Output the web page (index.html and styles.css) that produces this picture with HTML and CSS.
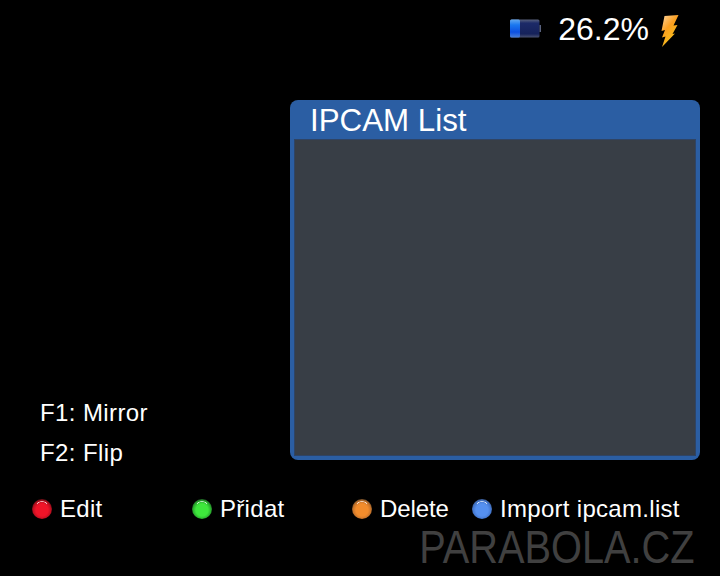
FILE: index.html
```html
<!DOCTYPE html>
<html lang="cs">
<head>
<meta charset="utf-8">
<title>IPCAM List</title>
<link rel="stylesheet" href="styles.css">
</head>
<body>
<div class="screen">
  <header class="status">
    <svg class="battery" width="34" height="20" viewBox="0 0 34 20" aria-hidden="true">
      <defs>
        <linearGradient id="batBody" x1="0" y1="0" x2="0" y2="1">
          <stop offset="0" stop-color="#59627e"/>
          <stop offset=".2" stop-color="#1c2a68"/>
          <stop offset=".8" stop-color="#16225a"/>
          <stop offset="1" stop-color="#4a5270"/>
        </linearGradient>
        <linearGradient id="batFill" x1="0" y1="0" x2="0" y2="1">
          <stop offset="0" stop-color="#62a8f0"/>
          <stop offset=".3" stop-color="#1a78f0"/>
          <stop offset=".7" stop-color="#0d50e0"/>
          <stop offset="1" stop-color="#4a80d8"/>
        </linearGradient>
      </defs>
      <rect x="2" y="0.500" width="29.500" height="18" rx="1.500" fill="url(#batBody)"/>
      <rect x="2" y="0.500" width="10" height="18" rx="1.500" fill="url(#batFill)"/>
      <rect x="31.500" y="6" width="1.500" height="7" fill="#59627e"/>
    </svg>
    <span class="percent">26.2%</span>
    <svg class="bolt" width="20" height="34" viewBox="0 0 20 34" aria-hidden="true">
      <defs>
        <linearGradient id="boltFill" x1="0" y1="0" x2="0.600" y2="1">
          <stop offset="0" stop-color="#ffd8a4"/>
          <stop offset=".45" stop-color="#fb9f20"/>
          <stop offset=".8" stop-color="#f7b81c"/>
          <stop offset="1" stop-color="#ffe070"/>
        </linearGradient>
      </defs>
      <path d="M5.500 2 L19.500 1 L14.500 11.500 L18.500 11 L13.500 20 L16 19.500 L3 33 L6.500 22.500 L3 23.500 L6 16 L2.500 17 Z" fill="url(#boltFill)"/>
    </svg>
  </header>

  <main class="content">
    <ul class="hints">
      <li>F1: Mirror</li>
      <li>F2: Flip</li>
    </ul>
    <section class="panel">
      <h1 class="panel-title">IPCAM List</h1>
      <div class="panel-body"></div>
    </section>
  </main>

  <nav class="legend">
    <span class="key"><i class="dot dot-red"></i>Edit</span>
    <span class="key"><i class="dot dot-green"></i>Přidat</span>
    <span class="key key-tight"><i class="dot dot-orange"></i>Delete</span>
    <span class="key"><i class="dot dot-blue"></i>Import ipcam.list</span>
  </nav>

  <footer class="brand"><span class="brand-text">PARABOLA.CZ</span></footer>
</div>
</body>
</html>
```

FILE: styles.css
```css
* {
  box-sizing: border-box;
}

html,
body {
  margin: 0;
  background: #000;
}

.screen {
  width: 720px;
  height: 576px;
  overflow: hidden;
  display: flex;
  flex-direction: column;
  color: #fff;
  font-family: "Liberation Sans", Arial, sans-serif;
}

.status {
  height: 100px;
  flex: none;
  padding: 13px 40px 0 0;
  display: flex;
  justify-content: flex-end;
  align-items: flex-start;
}

.battery {
  margin-top: 6px;
}

.percent {
  margin-left: 16px;
  font-size: 32px;
  line-height: 32px;
}

.bolt {
  margin-left: 10px;
  margin-top: 1px;
  margin-right: 1px;
}

.content {
  height: 380px;
  flex: none;
  padding: 0 20px 0 40px;
  display: flex;
  justify-content: space-between;
  align-items: flex-end;
}

.hints {
  list-style: none;
  margin: 0;
  padding: 0 0 7px;
  font-size: 24px;
  line-height: 40px;
  letter-spacing: 0.4px;
}

.panel {
  align-self: flex-start;
  width: 410px;
  height: 360px;
  display: flex;
  flex-direction: column;
  background: #2b5ea3;
  border-radius: 8px;
  padding: 0 4px 4px;
}

.panel-title {
  height: 39px;
  margin: 0;
  padding-left: 16px;
  font-size: 31.300px;
  font-weight: 400;
  line-height: 41px;
}

.panel-body {
  flex: 1;
  background: #383e46;
  border: 1px solid #2f4465;
}

.legend {
  height: 48px;
  flex: none;
  padding: 15px 0 0 32px;
  display: grid;
  grid-template-columns: 160px 160px 120px auto;
  align-items: start;
  font-size: 24px;
  line-height: 28px;
  letter-spacing: 0.3px;
}

.key {
  display: flex;
  align-items: center;
  gap: 8px;
}

.key-tight {
  letter-spacing: -0.1px;
}

.dot {
  position: relative;
  flex: none;
  width: 20px;
  height: 20px;
  border-radius: 50%;
}

.dot::after {
  content: "";
  position: absolute;
  top: 1px;
  left: 4px;
  width: 12px;
  height: 5px;
  border-radius: 50%;
  background: radial-gradient(ellipse 6px 4px at 50% 100%, transparent 0 70%, rgba(255, 255, 255, 0.8) 85%, transparent 100%);
}

.dot-red {
  background: radial-gradient(circle 11px at 50% 55%, #f01428 0 55%, #c00f20 80%, #5a0c12 100%);
}

.dot-green {
  background: radial-gradient(circle 11px at 50% 55%, #3ee83c 0 55%, #2bb02e 80%, #1c5a22 100%);
}

.dot-orange {
  background: radial-gradient(circle 11px at 50% 55%, #f28c2c 0 55%, #c8742a 80%, #6a4a28 100%);
}

.dot-blue {
  background: radial-gradient(circle 11px at 50% 55%, #5590f0 0 55%, #4478d0 80%, #3a5a90 100%);
}

.brand {
  height: 48px;
  flex: none;
  padding: 0 25px 0 0;
  text-align: right;
  color: #404040;
  font-size: 47px;
  line-height: 38px;
}

.brand-text {
  display: inline-block;
  transform: scaleX(0.846);
  transform-origin: right center;
}
```
